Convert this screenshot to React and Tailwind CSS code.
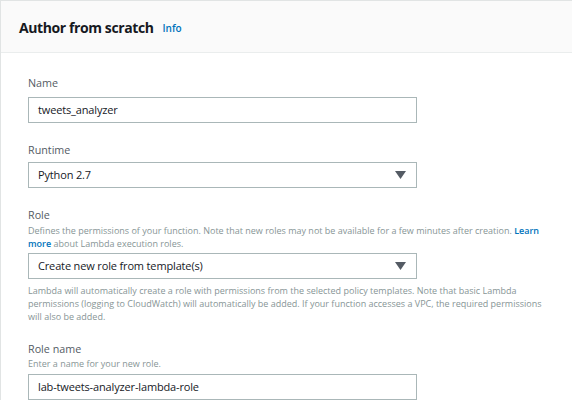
import { useState } from 'react';

function Caret() {
  return (
    <svg width="11" height="8" viewBox="0 0 11 8" className="shrink-0">
      <path d="M0 0 H11 L5.5 8 Z" fill="#545b64" />
    </svg>
  );
}

function TextInput({ value }) {
  return (
    <div className="flex h-[26px] w-[389px] items-center border border-[#aab7b8] bg-white px-[9px] text-[11px] tracking-[-0.15px] text-[#16191f]">
      {value}
    </div>
  );
}

function SelectBox({ value }) {
  return (
    <div className="flex h-[26px] w-[389px] items-center justify-between border border-[#aab7b8] bg-white pl-[9px] pr-[10px] text-[11px] tracking-[-0.15px] text-[#16191f]">
      <span>{value}</span>
      <Caret />
    </div>
  );
}

export default function App() {
  const [name] = useState('tweets_analyzer');

  return (
    <div className="h-[406px] w-[572px] overflow-hidden bg-white font-['Open_Sans',sans-serif]">
      <div className="border-l border-t border-[#e1e4e4]">
        {/* Header */}
        <div className="flex h-[52px] items-center border-b border-[#eaeded] bg-[#fafafa] pl-[18px]">
          <h2 className="mt-[2px] text-[14px] font-bold tracking-[-0.4px] text-[#16191f]">Author from scratch</h2>
          <span className="ml-[9px] mt-[4px] text-[10px] font-semibold text-[#0073bb]">Info</span>
        </div>

        {/* Body */}
        <div className="px-[27px] pt-[22px]">
          <label className="block text-[10.75px] leading-[16px] text-[#545b64]">Name</label>
          <div className="mt-[6px]">
            <TextInput value={name} />
          </div>

          <label className="mt-[19px] block text-[10.75px] leading-[16px] text-[#545b64]">Runtime</label>
          <div className="mt-[4px]">
            <SelectBox value="Python 2.7" />
          </div>

          <label className="mt-[19px] block text-[10.75px] leading-[16px] text-[#545b64]">Role</label>
          <p className="mt-[1px] text-[9px] leading-[13px] text-[#879596]">
            Defines the permissions of your function. Note that new roles may not be available for a few minutes after creation.{' '}
            <span className="font-semibold text-[#0073bb]">Learn</span>
            <br />
            <span className="font-semibold text-[#0073bb]">more</span> about Lambda execution roles.
          </p>
          <div className="mt-[3px]">
            <SelectBox value="Create new role from template(s)" />
          </div>
          <p className="mt-[5px] text-[9px] leading-[13px] text-[#879596]">
            Lambda will automatically create a role with permissions from the selected policy templates. Note that basic Lambda
            <br />
            permissions (logging to CloudWatch) will automatically be added. If your function accesses a VPC, the required permissions
            <br />
            will also be added.
          </p>

          <label className="mt-[18px] block text-[10.75px] leading-[16px] text-[#545b64]">Role name</label>
          <p className="text-[9px] leading-[13px] text-[#879596]">Enter a name for your new role.</p>
          <div className="mt-[4px]">
            <TextInput value="lab-tweets-analyzer-lambda-role" />
          </div>
        </div>
      </div>
    </div>
  );
}
